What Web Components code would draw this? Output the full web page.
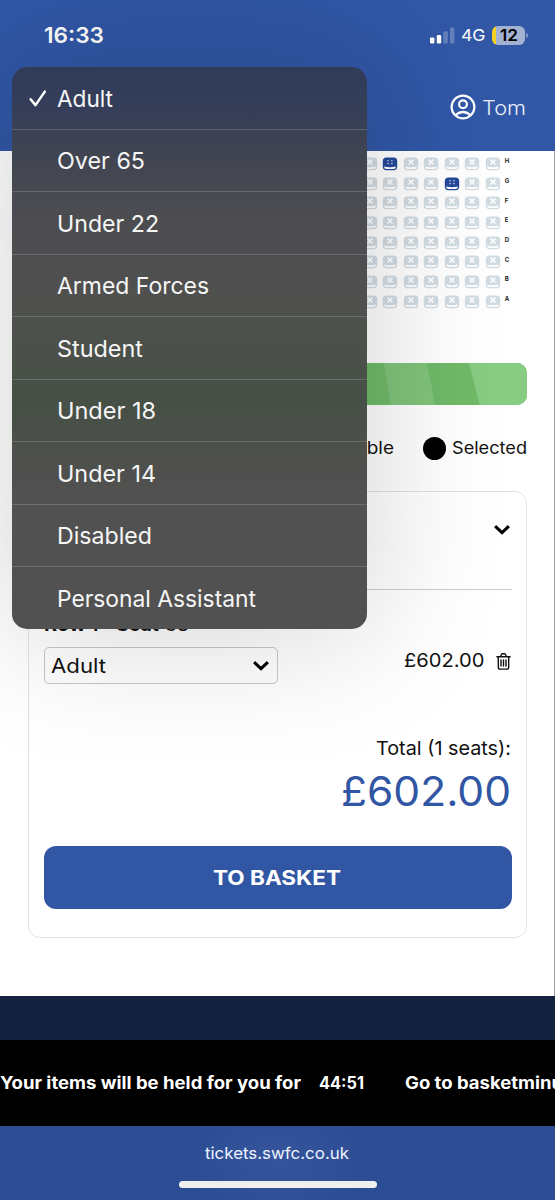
<!DOCTYPE html>
<html lang="en">
<head>
<meta charset="utf-8">
<title>Tickets</title>
<style>
html,body{margin:0;padding:0}
body{width:555px;height:1200px;overflow:hidden;background:#fff;font-family:Inter,"Liberation Sans",sans-serif}
</style>
</head>
<body>
<ticket-page></ticket-page>
<script>
const define = (name, html, setup) => customElements.define(name, class extends HTMLElement {
  connectedCallback() {
    if (this.shadowRoot) return;
    const t = document.createElement('template');
    t.innerHTML = typeof html === 'function' ? html(this) : html;
    this.attachShadow({mode: 'open'}).append(t.content.cloneNode(true));
    if (setup) setup(this);
  }
});

// Single line of text stretched to a given advance width.
define('fit-text', e => `<style>
:host{display:block;flex:none;width:${e.getAttribute('w')}px;white-space:nowrap;line-height:1.2;text-align:left}
span{display:inline-block;transform-origin:0 50%}
</style><span><slot></slot></span>`, e => {
  const s = e.shadowRoot.querySelector('span');
  s.style.transform = `scaleX(${+e.getAttribute('w') / s.getBoundingClientRect().width})`;
});

define('chevron-icon', `<style>:host{display:block;width:16px;height:10px;flex:none}svg{display:block}</style>
<svg width="16" height="10" viewBox="0 0 16 10"><path d="M2.2 2.2l5.8 5.4 5.8-5.4" fill="none" stroke="#000" stroke-width="3" stroke-linecap="square" stroke-linejoin="miter"/></svg>`);

define('trash-icon', `<style>:host{display:block;width:15px;height:17px;flex:none}svg{display:block}</style>
<svg width="15" height="17" viewBox="0 0 15 17" fill="none" stroke="#111" stroke-width="1.4" stroke-linecap="round"><path d="M.9 3.8h13.2M4.6 3.5l1-2.2q.3-.5.8-.5h2.2q.5 0 .8.5l1 2.2M2.3 4v10.2q0 1.9 1.9 1.9h6.6q1.9 0 1.9-1.9V4M5 7v6M7.5 7v6M10 7v6"/></svg>`);

define('status-bar', `<style>
:host{display:flex;align-items:center;height:71px;box-sizing:border-box;padding:0 27px 0 44px;color:#fff}
.time{font-size:21.5px;font-weight:600;flex:none}
.sp{flex:1}
.net{font-size:16.5px;font-weight:400;margin:1px 1px 0 6px}
.bat{display:flex;align-items:center;justify-content:center;width:33px;height:18.5px;border-radius:6px;margin-left:6px;background:linear-gradient(90deg,#fbd11f 4px,#a3b2d3 4px);color:#000;font-size:16.5px;font-weight:600}
.tip{width:2px;height:5px;margin-left:1px;border-radius:0 2px 2px 0;background:#8597c5}
</style>
<fit-text class="time" w="60">16:33</fit-text><div class="sp"></div>
<svg width="25" height="17" viewBox="0 0 25 17" fill="#fff"><rect y="10.6" width="4.4" height="5.8" rx="1.2"/><rect x="6.8" y="8" width="4.4" height="8.4" rx="1.2"/><rect x="13.4" y="4.2" width="4.4" height="12.2" rx="1.2" opacity=".25"/><rect x="20" y=".4" width="4.4" height="16" rx="1.2" opacity=".25"/></svg>
<fit-text class="net" w="24.5">4G</fit-text>
<div class="bat"><fit-text w="18">12</fit-text></div><div class="tip"></div>`);

define('account-bar', `<style>
:host{display:flex;align-items:center;justify-content:flex-end;height:76px;padding-right:29.5px;color:#e9effc;font-size:19.5px;font-weight:300;gap:6px}
svg{margin-top:-3px}
fit-text{margin-top:1px}
</style>
<svg width="26" height="26" viewBox="0 0 26 26" fill="none" stroke="#fff" stroke-width="2.2"><circle cx="13" cy="13" r="11.4"/><circle cx="13" cy="10.2" r="3.9"/><path d="M5.4 21q7.6-6 15.2 0"/></svg>
<fit-text w="44">Tom</fit-text>`);

define('seat-cell', e => {
  const on = e.hasAttribute('selected'), c = on ? '#24489a' : '#d2dce3';
  return `<style>:host{display:block;width:16px;height:14px}svg{display:block}</style>
<svg width="16" height="14" viewBox="0 0 16 14"><path d="M4.4.5h7.2q3.6 0 3.6 3.7v5.3q0 3.8-3.6 3.8H4.4Q.8 13.3.8 9.500V4.200Q.8.500 4.400.500z" fill="${c}"/><path d="M2 9.500q6 1.400 12 0-.1 2.500-2.500 2.500h-7Q2.100 12 2 9.500z" fill="#fff"/>${on
  ? '<path d="M5.400 3.700h1.400M9.200 3.700h1.400M5.400 6.500h1.400M9.200 6.500h1.400" stroke="#c9d5ee" stroke-width="1.300"/>'
  : '<path d="M5.600 2.700l4.800 4.800M10.400 2.700L5.600 7.500" stroke="#fff" stroke-width="1.700"/>'}</svg>`;
});

define('seat-map', () => {
  const rows = [...'HGFEDCBA'].map(r => {
    const seats = Array.from({length: 7}, (_, i) => `<seat-cell ${(r === 'H' && i === 1) || (r === 'G' && i === 4) ? 'selected' : ''}></seat-cell>`).join('');
    return `<div class="row">${seats}<b>${r}</b></div>`;
  }).join('');
  return `<style>
:host{display:block;padding:3px 0 0 361.5px;height:163px}
.row{display:grid;grid-template-columns:repeat(7,20.6px) 10px;height:19.7px;align-items:center}
b{font-size:6px;line-height:7px;color:#222;margin:-6px 0 0 -1px}
</style>${rows}`;
});

define('pitch-banner', `<style>:host{display:block;margin:45.5px 28px 0;height:42.5px;border-radius:10px;overflow:hidden}svg{display:block}</style>
<svg width="499" height="43"><rect width="499" height="43" fill="#6fba69"/><path d="M356 0h43l8.500 43h-45z" fill="#80c37b"/><path d="M441 0h58v43h-47z" fill="#88cb83"/></svg>`);

define('seat-legend', `<style>
:host{display:flex;align-items:center;justify-content:flex-end;height:86px;padding-right:28px;font-size:17.3px;color:#111}
i{width:23px;height:23px;border-radius:50%;background:#000;margin:0 6px 0 29px}
</style>
<fit-text w="80">Available</fit-text><i></i><fit-text w="75">Selected</fit-text>`);

define('order-card', `<style>
:host{display:block;box-sizing:border-box;width:499px;height:447px;margin-left:28px;border:1.5px solid #e2e2e2;border-radius:12px;padding:0 14.5px}
.head{display:flex;justify-content:flex-end;align-items:center;height:76px;padding-right:1.5px;border-bottom:1px solid #ccc;padding-bottom:21px;box-sizing:content-box}
.seat{height:57px;box-sizing:border-box;padding-top:24px;display:flex;gap:6px;font-size:19px;line-height:24px}
.item{display:flex;align-items:center;font-size:19.3px}
.sel{display:flex;align-items:center;justify-content:space-between;width:234.5px;height:37px;box-sizing:border-box;border:1.5px solid #c8c8c8;border-radius:5px;padding:0 8px 0 6px;font-size:20px}
.price{margin:-10px 11px 0 auto}
trash-icon{margin:-8px 1px 0 0}
.total{display:flex;flex-direction:column;align-items:flex-end;margin-top:53px;padding-right:1px}
.l{font-size:19.3px;color:#111}
.big{font-size:41px;color:#3156a4;margin-top:6px;line-height:50px;font-weight:400}
button{display:flex;align-items:center;justify-content:center;width:468px;height:63px;border:0;border-radius:12px;background:#3156a4;color:#fff;font:700 20px Inter,sans-serif;margin-top:30px;padding:0 2px 0 0}
</style>
<div class="head"><chevron-icon></chevron-icon></div>
<div class="seat"><fit-text w="42"><b>Row</b></fit-text><fit-text w="18">P</fit-text><fit-text w="43"><b>Seat</b></fit-text><fit-text w="24">38</fit-text></div>
<div class="item"><div class="sel"><fit-text w="55">Adult</fit-text><chevron-icon></chevron-icon></div><fit-text class="price" w="80.5">£602.00</fit-text><trash-icon></trash-icon></div>
<div class="total"><fit-text class="l" w="135">Total (1 seats):</fit-text><fit-text class="big" w="170">£602.00</fit-text></div>
<button><fit-text w="128">TO BASKET</fit-text></button>`);

define('hold-timer', `<style>
:host{display:flex;align-items:center;height:86px;background:#000;color:#fff;font-size:16.8px;font-weight:700;overflow:hidden}
fit-text{margin-top:1px}
.t{margin:1px 41px 0 18px}
</style><fit-text w="301">Your items will be held for you for</fit-text><fit-text class="t" w="45">44:51</fit-text><fit-text w="113">Go to basket</fit-text><fit-text w="73">minutes</fit-text>`);

define('browser-bar', `<style>
:host{display:flex;flex-direction:column;align-items:center;height:74px;background:radial-gradient(ellipse 90px 60px at 50% 45%,#36549c,#2c4d94);color:#eef3ff;font-size:16.5px}
fit-text{margin:18px 1px 0 0}
i{width:198px;height:7.5px;border-radius:4px;background:#efefef;margin-top:17px}
</style><fit-text w="144">tickets.swfc.co.uk</fit-text><i></i>`);

define('menu-option', e => `<style>
:host{display:flex;align-items:center;height:62.5px;box-sizing:border-box;padding-left:16px;border-bottom:1px solid rgba(255,255,255,.16);color:#f6f6f6;font-size:23.3px;font-weight:400}
:host(:last-child){border-bottom:0}
svg{width:20px;height:20px;margin-right:8.5px}
fit-text{margin-top:2px}
</style><svg viewBox="0 0 20 20">${e.hasAttribute('checked') ? '<path d="M2.6 11.2l4.9 5.9L16.8 3.6" fill="none" stroke="#fff" stroke-width="2.5" stroke-linecap="round" stroke-linejoin="round"/>' : ''}</svg>
<fit-text w="${e.getAttribute('w')}"><slot></slot></fit-text>`);

define('option-menu', `<style>
:host{position:absolute;left:12px;top:67px;width:355px;height:562px;border-radius:15px;overflow:hidden;box-shadow:0 0 140px rgba(0,0,0,.19);
background:linear-gradient(180deg,#303b58 0,#353e59 40px,#414551 92px,#4b4c51 140px,#50504f 225px,#4b514a 285px,#465046 333px,#4e504c 390px,#515151 430px,#515151 100%)}
</style><slot></slot>`);

define('ticket-page', `<style>
:host{display:flex;flex-direction:column;position:relative;width:555px;height:1200px;overflow:hidden}
header{height:151px;background:#3157a6;flex:none}
account-bar{margin-top:-.5px}
main{height:845px;flex:none;background:#fff;color:#111}
.navy{height:44px;background:#14213f}
.edge{position:absolute;right:0;top:151px;width:1px;height:845px;background:#a3a3a3}
</style>
<header><status-bar></status-bar><account-bar></account-bar></header>
<main><seat-map></seat-map><pitch-banner></pitch-banner><seat-legend></seat-legend><order-card></order-card></main>
<div class="navy"></div><hold-timer></hold-timer><browser-bar></browser-bar>
<div class="edge"></div>
<option-menu>
<menu-option checked w="56">Adult</menu-option><menu-option w="88">Over 65</menu-option><menu-option w="102">Under 22</menu-option><menu-option w="152">Armed Forces</menu-option><menu-option w="86">Student</menu-option><menu-option w="99">Under 18</menu-option><menu-option w="99">Under 14</menu-option><menu-option w="95">Disabled</menu-option><menu-option w="199">Personal Assistant</menu-option>
</option-menu>`);
</script>
</body>
</html>
